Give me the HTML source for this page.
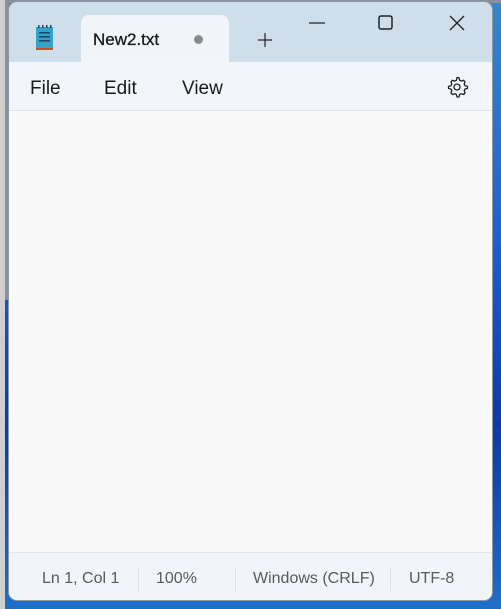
<!DOCTYPE html>
<html><head><style>
body{margin:0;width:501px;height:609px;overflow:hidden;background:linear-gradient(180deg,#3a86c8 0%,#1d5fcf 40%,#0d3aa8 70%,#1f6fc8 100%);font-family:"Liberation Sans",sans-serif;position:relative}
.top{position:absolute;left:0;top:0;width:501px;height:3px;background:#8a9099}
.lft{position:absolute;left:0;top:0;width:5px;height:609px;background:#cfcfcf}
.lft2{position:absolute;left:5px;top:0;width:4px;height:300px;background:#8a9099}
.win{position:absolute;left:9px;top:2px;width:483px;height:598px;background:#cedeeb;border-radius:8px;overflow:hidden;box-shadow:0 0 0 1px #8e98a3}
.tab{position:absolute;left:72px;top:13px;width:148px;height:49px;background:#f1f5f9;border-radius:8px 8px 0 0}
.tab .t{position:absolute;left:12px;top:15px;font-size:17px;color:#1a1a1a;-webkit-text-stroke:0.3px #1a1a1a}
.dot{position:absolute;left:113px;top:20px;width:9px;height:9px;border-radius:50%;background:#8a8a8a}
.menu{position:absolute;left:0;top:60px;width:483px;height:48px;background:#f2f6fa;border-bottom:1px solid #dfe3e8}
.menu span{position:absolute;top:16px;font-size:19px;color:#1a1a1a}
.edit{position:absolute;left:0;top:109px;width:483px;height:441px;background:#f9f9f9}
.status{position:absolute;left:0;top:550px;width:483px;height:48px;background:#f1f4f8;border-top:1px solid #e3e6ea}
.status span{position:absolute;top:17px;font-size:16px;color:#5a5a5a}
.sep{position:absolute;top:14px;width:1px;height:24px;background:#dcdfe3}
</style></head><body>
<div class="top"></div><div class="lft"></div><div class="lft2"></div>
<div class="win">
 <svg style="position:absolute;left:26px;top:22px" width="20" height="28" viewBox="0 0 20 28">
  <rect x="1" y="3" width="17" height="21" fill="#35a2c8"/>
  <rect x="1" y="24" width="17" height="2" fill="#b5582a"/>
  <g fill="#1b4a6a"><rect x="3" y="1" width="1.5" height="3"/><rect x="7" y="1" width="1.5" height="3"/><rect x="11" y="1" width="1.5" height="3"/><rect x="15" y="1" width="1.5" height="3"/>
  <rect x="4" y="8" width="11" height="1.6"/><rect x="4" y="12" width="11" height="1.6"/><rect x="4" y="16" width="11" height="1.6"/></g>
 </svg>
 <div class="tab"><span class="t">New2.txt</span><div class="dot"></div></div>
 <svg style="position:absolute;left:249px;top:31px" width="14" height="14"><path d="M7 0V14M0 7H14" stroke="#222" stroke-width="1.2"/></svg>
 <svg style="position:absolute;left:300px;top:20px" width="16" height="2"><path d="M0 1H16" stroke="#222" stroke-width="1.2"/></svg>
 <svg style="position:absolute;left:369px;top:13px" width="16" height="16"><rect x="1" y="1" width="13" height="13" rx="2" fill="none" stroke="#222" stroke-width="1.5"/></svg>
 <svg style="position:absolute;left:440px;top:13px" width="16" height="16"><path d="M1 1L15 15M15 1L1 15" stroke="#222" stroke-width="1.3"/></svg>
 <div class="menu">
  <span style="left:21px">File</span><span style="left:95px">Edit</span><span style="left:173px">View</span>
  <svg style="position:absolute;left:436px;top:13px" width="24" height="24" viewBox="0 0 24 24"><path d="M12 2.5l2 .3.6 2.4 1.6.9 2.4-.8 1.4 1.5-.8 2.4.9 1.6 2.4.6v2l-2.4.6-.9 1.6.8 2.4-1.4 1.5-2.4-.8-1.6.9-.6 2.4h-2l-.6-2.4-1.6-.9-2.4.8-1.4-1.5.8-2.4-.9-1.6-2.4-.6v-2l2.4-.6.9-1.6-.8-2.4 1.4-1.5 2.4.8 1.6-.9.6-2.4z" fill="none" stroke="#222" stroke-width="1.3" stroke-linejoin="round"/><circle cx="12" cy="12" r="3" fill="none" stroke="#222" stroke-width="1.3"/></svg>
 </div>
 <div class="edit"></div>
 <div class="status">
  <span style="left:33px">Ln 1, Col 1</span><div class="sep" style="left:129px"></div>
  <span style="left:147px">100%</span><div class="sep" style="left:226px"></div>
  <span style="left:244px">Windows (CRLF)</span><div class="sep" style="left:381px"></div>
  <span style="left:400px">UTF-8</span>
 </div>
</div>
</body></html>
